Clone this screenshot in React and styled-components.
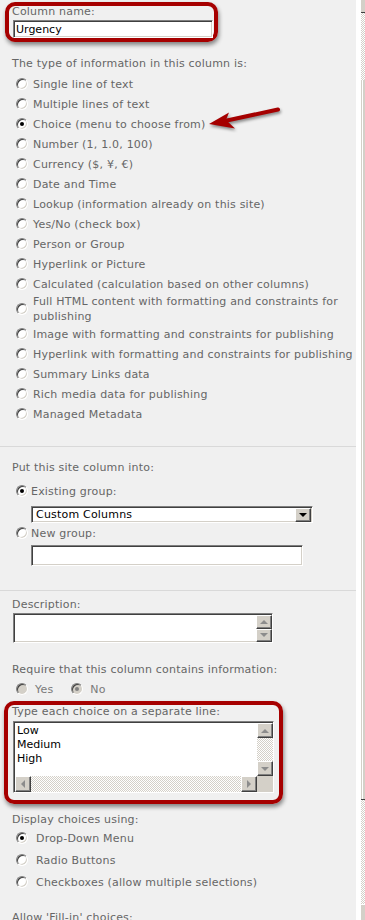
import React from 'react'
import styled, { createGlobalStyle, css } from 'styled-components'

const GlobalStyle = createGlobalStyle`
    html, body {
        margin: 0;
        padding: 0;
        background: #ffffff;
    }
`

// classic win2k look helpers
const dither = css`
    background-color: #ffffff;
    background-image: repeating-conic-gradient(#d4d0c8 0 25%, #ffffff 0 50%);
    background-size: 2px 2px;
`
const sunken = css`
    box-sizing: border-box;
    border: 1px solid;
    border-color: #7f7f7f #ffffff #ffffff #7f7f7f;
    box-shadow: inset 1px 1px 0 #404040, inset -1px -1px 0 #d4d0c8;
    background: #ffffff;
`
const arrows = {
    up: (c) => css`border-width: 0 4px 4px; border-color: transparent transparent ${c};`,
    down: (c) => css`border-width: 4px 4px 0; border-color: ${c} transparent transparent;`,
    left: (c) => css`border-width: 4px 4px 4px 0; border-color: transparent ${c} transparent transparent;`,
    right: (c) => css`border-width: 4px 0 4px 4px; border-color: transparent transparent transparent ${c};`,
}

const Screen = styled.div`
    display: flex;
    width: 365px;
    height: 920px;
    overflow: hidden;
    font-family: "DejaVu Sans", Verdana, sans-serif;
    font-size: 11px;
    letter-spacing: 0.2px;
    color: #666666;
`
const Panel = styled.div`
    position: relative;
    width: 356px;
    flex: none;
    background: #f0f0f0;
`
const Gutter = styled.div`
    width: 5px;
    flex: none;
    background: #ffffff;
`
const PageScroll = styled.div`
    width: 4px;
    flex: none;
    display: flex;
    flex-direction: column;
`
const PageTrack = styled.div`
    ${dither}
    height: ${({ h }) => h ? `${h}px` : 'auto'};
    flex: ${({ h }) => h ? 'none' : 1};
`
const PageButton = styled.div`
    height: ${({ h }) => h}px;
    background: #d4d0c8;
    ${({ top }) => top ? css`border-bottom: 1px solid #404040;` : css`border-top: 1px solid #ffffff;`}
`
const PageThumb = styled.div`
    height: ${({ h }) => h}px;
    background: linear-gradient(to right, #d4d0c8 0 1px, #ffffff 1px 2px, #d4d0c8 2px);
    border-bottom: 1px solid #404040;
`

const Section = styled.div`
    padding-bottom: ${({ pb }) => pb || 0}px;
    border-bottom: ${({ divided }) => divided ? '1px solid #d9d9d9' : '0'};
`
const Highlight = styled.div`
    box-sizing: border-box;
    width: ${({ w }) => w}px;
    margin: ${({ m }) => m};
    padding: 0 3px ${({ pb }) => pb || 0}px ${({ pl }) => pl || 3}px;
    border: 4px solid #a60000;
    border-radius: 10px;
    box-shadow: 1px 3px 4px rgba(0, 0, 0, 0.45);
`
const Heading = styled.div`
    padding-left: ${({ pl }) => pl ?? 12}px;
    margin-top: ${({ mt }) => mt || 0}px;
    line-height: ${({ lh }) => lh || 14}px;
    white-space: nowrap;
`
const TextInput = styled.input`
    ${sunken}
    display: block;
    width: ${({ w }) => w}px;
    height: ${({ h }) => h}px;
    margin: ${({ mt }) => mt || 0}px 0 0 ${({ ml }) => ml || 0}px;
    padding: 0 0 0 2px;
    font: 11px "DejaVu Sans", Verdana, sans-serif;
    color: #000000;
    outline: none;
`
const OptionList = styled.div`
    margin-top: ${({ mt }) => mt || 0}px;
    display: flex;
    flex-direction: ${({ inline }) => inline ? 'row' : 'column'};
`
const Option = styled.div`
    display: flex;
    align-items: center;
    min-height: ${({ h }) => h || 20}px;
    padding-left: ${({ pl }) => pl ?? 16}px;
    gap: ${({ gap }) => gap || 5}px;
    line-height: 15px;
    color: ${({ disabled }) => disabled ? '#7a7a7a' : 'inherit'};
`
const Radio = styled.span`
    position: relative;
    flex: none;
    box-sizing: border-box;
    width: 12px;
    height: 12px;
    border-radius: 50%;
    border: 1px solid;
    border-color: #808080 #ffffff #ffffff #808080;
    background: ${({ disabled }) => disabled ? '#d4d0c8' : '#ffffff'};
    box-shadow: inset 1px 1px 0 #404040, inset -1px -1px 0 #d4d0c8;
    &::after {
        content: '';
        display: ${({ checked }) => checked ? 'block' : 'none'};
        position: absolute;
        left: 3px;
        top: 3px;
        width: 4px;
        height: 4px;
        border-radius: 50%;
        background: ${({ disabled }) => disabled ? '#808080' : '#000000'};
    }
`
const SelectBox = styled.div`
    ${sunken}
    display: flex;
    align-items: center;
    width: ${({ w }) => w}px;
    height: 17px;
    margin: 5px 0 0 31px;
    padding: 1px;
    color: #000000;
`
const SelectText = styled.div`
    flex: 1;
    padding-left: 3px;
    line-height: 14px;
`
const ScrollButton = styled.div`
    box-sizing: border-box;
    flex: ${({ stretch }) => stretch ? 1 : 'none'};
    width: ${({ w }) => w || 16}px;
    height: ${({ h }) => h ? `${h}px` : 'auto'};
    background: #d4d0c8;
    border: 1px solid;
    border-color: #ffffff #404040 #404040 #ffffff;
    box-shadow: inset -1px -1px 0 #808080;
    display: flex;
    align-items: center;
    justify-content: center;
    &::before {
        content: '';
        width: 0;
        height: 0;
        border-style: solid;
        ${({ dir, ink }) => arrows[dir](ink || '#8c8c8c')}
    }
`
const TextArea = styled.div`
    ${sunken}
    display: flex;
    flex-direction: column;
    width: ${({ w }) => w}px;
    height: ${({ h }) => h}px;
    margin: ${({ mt }) => mt || 0}px 0 0 ${({ ml }) => ml || 0}px;
    padding: 1px 0 0 1px;
`
const TextRow = styled.div`
    flex: 1;
    display: flex;
    min-height: 0;
`
const TextContent = styled.div`
    flex: 1;
    padding: 1px 0 0 2px;
    line-height: 14px;
    letter-spacing: 0;
    color: #000000;
`
const VScroll = styled.div`
    width: 16px;
    display: flex;
    flex-direction: column;
`
const Track = styled.div`
    ${dither}
    flex: 1;
`
const HScroll = styled.div`
    height: 16px;
    display: flex;
`
const Corner = styled.div`
    width: 16px;
    background: #d4d0c8;
`
const Pointer = styled.svg`
    position: absolute;
    left: 200px;
    top: 100px;
    width: 86px;
    height: 36px;
    overflow: visible;
    filter: drop-shadow(1px 2px 1.5px rgba(0, 0, 0, 0.45));
`

const typeOptions = [
    { label: 'Single line of text' },
    { label: 'Multiple lines of text' },
    { label: 'Choice (menu to choose from)', checked: true },
    { label: 'Number (1, 1.0, 100)' },
    { label: 'Currency ($, ¥, €)' },
    { label: 'Date and Time' },
    { label: 'Lookup (information already on this site)' },
    { label: 'Yes/No (check box)' },
    { label: 'Person or Group' },
    { label: 'Hyperlink or Picture' },
    { label: 'Calculated (calculation based on other columns)' },
    { label: 'Full HTML content with formatting and constraints for publishing' },
    { label: 'Image with formatting and constraints for publishing' },
    { label: 'Hyperlink with formatting and constraints for publishing' },
    { label: 'Summary Links data' },
    { label: 'Rich media data for publishing' },
    { label: 'Managed Metadata' },
]
const displayOptions = [
    { label: 'Drop-Down Menu', checked: true },
    { label: 'Radio Buttons' },
    { label: 'Checkboxes (allow multiple selections)' },
]

export default function App() {
    return (
        <>
            <GlobalStyle />
            <Screen>
                <Panel>
                    <Section divided pb={22}>
                        <Highlight w={213} m="2px 0 0 5px">
                            <Heading pl={0} lh={11}>Column name:</Heading>
                            <TextInput w={200} h={18} mt={3} ml={1} readOnly value="Urgency" />
                        </Highlight>
                        <Heading mt={15}>The type of information in this column is:</Heading>
                        <OptionList mt={3}>
                            {typeOptions.map((opt, key) => (
                                <Option key={key}>
                                    <Radio checked={opt.checked} />
                                    <span>{opt.label}</span>
                                </Option>
                            ))}
                        </OptionList>
                    </Section>

                    <Section divided pb={24}>
                        <Heading mt={14}>Put this site column into:</Heading>
                        <OptionList mt={6}>
                            <Option gap={3}><Radio checked /><span>Existing group:</span></Option>
                        </OptionList>
                        <SelectBox w={282}>
                            <SelectText>Custom Columns</SelectText>
                            <ScrollButton dir="down" ink="#000000" w={16} h={14} />
                        </SelectBox>
                        <OptionList>
                            <Option gap={3}><Radio /><span>New group:</span></Option>
                        </OptionList>
                        <TextInput w={272} h={21} mt={2} ml={31} readOnly value="" />
                    </Section>

                    <Section>
                        <Heading mt={7}>Description:</Heading>
                        <TextArea w={260} h={30} mt={1} ml={13}>
                            <TextRow>
                                <TextContent />
                                <VScroll>
                                    <ScrollButton dir="up" stretch />
                                    <ScrollButton dir="down" stretch />
                                </VScroll>
                            </TextRow>
                        </TextArea>
                        <Heading mt={20}>Require that this column contains information:</Heading>
                        <OptionList inline mt={2}>
                            <Option disabled gap={7}><Radio disabled /><span>Yes</span></Option>
                            <Option disabled gap={7} pl={18}><Radio disabled checked /><span>No</span></Option>
                        </OptionList>

                        <Highlight w={279} m="2px 0 0 4px" pl={4} pb={7}>
                            <Heading pl={0}>Type each choice on a separate line:</Heading>
                            <TextArea w={261} h={72} mt={2} ml={1}>
                                <TextRow>
                                    <TextContent>Low<br />Medium<br />High</TextContent>
                                    <VScroll>
                                        <ScrollButton dir="up" h={15} />
                                        <Track />
                                        <ScrollButton dir="down" h={15} />
                                    </VScroll>
                                </TextRow>
                                <HScroll>
                                    <ScrollButton dir="left" />
                                    <Track />
                                    <ScrollButton dir="right" />
                                    <Corner />
                                </HScroll>
                            </TextArea>
                        </Highlight>

                        <Heading mt={9}>Display choices using:</Heading>
                        <OptionList>
                            {displayOptions.map((opt, key) => (
                                <Option key={key} h={22} gap={8}>
                                    <Radio checked={opt.checked} />
                                    <span>{opt.label}</span>
                                </Option>
                            ))}
                        </OptionList>
                        <Heading mt={18}>Allow 'Fill-in' choices:</Heading>
                    </Section>

                    <Pointer viewBox="0 0 86 36">
                        <line x1="78" y1="9.5" x2="27" y2="20.5" stroke="#a50000" strokeWidth="4" strokeLinecap="round" />
                        <polygon points="9,24 29,12.5 26,20 35,28.5" fill="#a50000" />
                    </Pointer>
                </Panel>
                <Gutter />
                <PageScroll>
                    <PageButton top h={12} />
                    <PageTrack h={67} />
                    <PageThumb h={719} />
                    <PageTrack />
                    <PageButton h={15} />
                </PageScroll>
            </Screen>
        </>
    )
}
